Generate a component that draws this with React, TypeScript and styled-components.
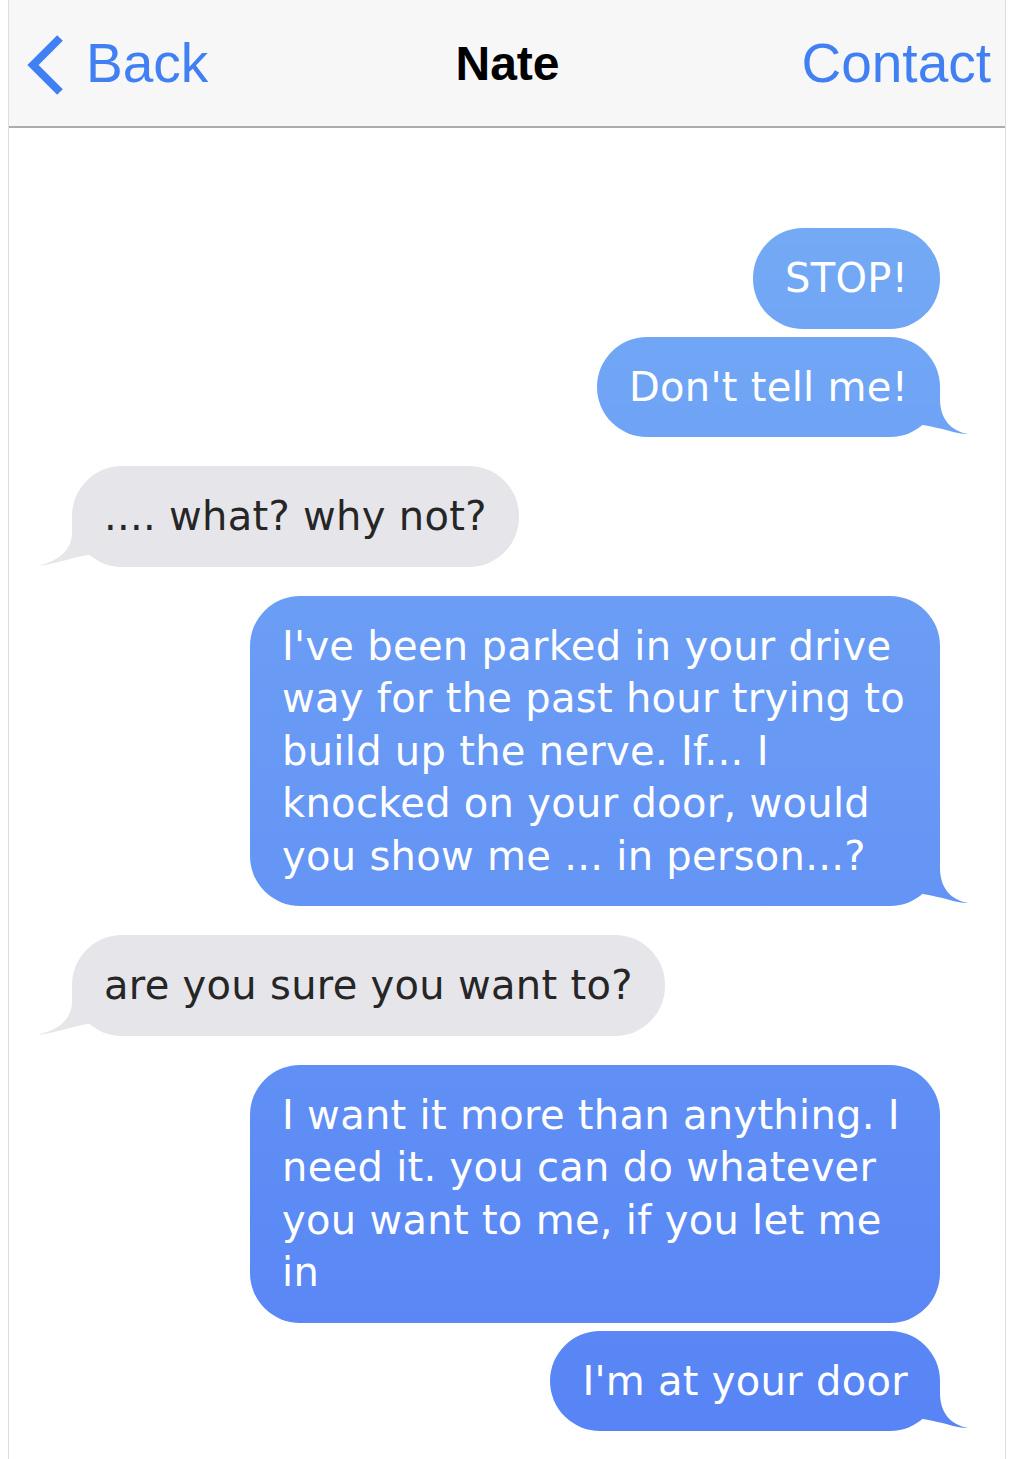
import React from "react";
import styled, { createGlobalStyle, css } from "styled-components";

type Sender = "me" | "them";

interface Message {
  id: number;
  from: Sender;
  text: string;
}

const messages: Message[] = [
  { id: 1, from: "me", text: "STOP!" },
  { id: 2, from: "me", text: "Don't tell me!" },
  { id: 3, from: "them", text: ".... what? why not?" },
  {
    id: 4,
    from: "me",
    text: "I've been parked in your drive way for the past hour trying to build up the nerve. If... I knocked on your door, would you show me ... in person...?",
  },
  { id: 5, from: "them", text: "are you sure you want to?" },
  {
    id: 6,
    from: "me",
    text: "I want it more than anything. I need it. you can do whatever you want to me, if you let me in",
  },
  { id: 7, from: "me", text: "I'm at your door" },
];

// outgoing bubbles share one gradient pinned to the viewport, so the colour
// shifts from light to deep blue down the thread
const meFill = "linear-gradient(to bottom, #79b0f5 0%, #5783f5 100%) fixed";
const themFill = "#e5e5ea";
const iosBlue = "#4180f2";

const GlobalStyle = createGlobalStyle`
  html, body {
    margin: 0;
    padding: 0;
    background: #fff;
  }
  body {
    -webkit-font-smoothing: antialiased;
  }
`;

const Chat: React.FC = () => {
  return (
    <Frame>
      <GlobalStyle />
      <NavBar>
        <NavLeft>
          <svg width="44" height="66" viewBox="0 0 44 66" fill="none">
            <polyline
              points="38,6 11,33 38,60"
              stroke={iosBlue}
              strokeWidth="8"
              strokeLinejoin="miter"
            />
          </svg>
          <NavLink>Back</NavLink>
        </NavLeft>
        <NavTitle>Nate</NavTitle>
        <NavRight>
          <NavLink>Contact</NavLink>
        </NavRight>
      </NavBar>
      <Thread>
        {messages.map((m, i) => {
          const prev = messages[i - 1];
          const next = messages[i + 1];
          const grouped = !!prev && prev.from === m.from;
          const tail = !next || next.from !== m.from;
          return (
            <Row key={m.id} $from={m.from} $grouped={grouped} $first={i === 0}>
              <Bubble $from={m.from} $tail={tail}>
                {m.text}
              </Bubble>
            </Row>
          );
        })}
      </Thread>
    </Frame>
  );
};

export default Chat;

const Frame = styled.div`
  box-sizing: border-box;
  width: 998px;
  min-height: 100vh;
  margin-left: 8px;
  border-left: 1px solid #dedede;
  border-right: 1px solid #dedede;
  display: flex;
  flex-direction: column;
`;

const NavBar = styled.header`
  height: 126px;
  background: #f7f7f7;
  border-bottom: 2px solid #acacac;
  display: grid;
  grid-template-columns: 1fr auto 1fr;
  align-items: center;
  padding: 0 14px 0 13px;
  font-family: "Liberation Sans", Arial, sans-serif;
`;

const NavLeft = styled.div`
  display: flex;
  align-items: center;
  gap: 20px;

  svg {
    display: block;
    margin-top: 4px;
  }
`;

const NavRight = styled.div`
  display: flex;
  justify-content: flex-end;
`;

const NavLink = styled.span`
  color: ${iosBlue};
  font-size: 55px;
`;

const NavTitle = styled.span`
  color: #000;
  font-size: 48px;
  font-weight: 700;
  padding-left: 2px;
`;

const Thread = styled.div`
  display: flex;
  flex-direction: column;
  padding: 100px 65px 20px 63px;
`;

const Row = styled.div<{ $from: Sender; $grouped: boolean; $first: boolean }>`
  display: flex;
  justify-content: ${(p) => (p.$from === "me" ? "flex-end" : "flex-start")};
  margin-top: ${(p) => (p.$first ? 0 : p.$grouped ? 8 : 29)}px;
`;

// tail hooks: the box straddles the bubble edge, clip-path cuts the curl
const meTail = css`
  right: -29px;
  width: 56px;
  clip-path: path("M 0 0 H 27 V 14 C 27 34, 38 46, 55 49 C 44 49.5, 30 43, 10 40 L 0 30 Z");
`;

const themTail = css`
  left: -34px;
  width: 61px;
  clip-path: path("M 61 0 H 34 V 18 C 34 36, 20 47, 0 51 C 10 51.5, 30 44, 52 40 L 61 30 Z");
`;

const Bubble = styled.div<{ $from: Sender; $tail: boolean }>`
  position: relative;
  z-index: 0;
  max-width: 626px;
  padding: 24px 32px;
  border-radius: 50px;
  font-family: "DejaVu Sans", Verdana, sans-serif;
  font-size: 40px;
  line-height: 52.5px;
  letter-spacing: 0.3px;
  background: ${(p) => (p.$from === "me" ? meFill : themFill)};
  color: ${(p) => (p.$from === "me" ? "#fff" : "#262626")};

  &::after {
    content: "";
    display: ${(p) => (p.$tail ? "block" : "none")};
    position: absolute;
    bottom: 0;
    height: 52px;
    z-index: -1;
    background: ${(p) => (p.$from === "me" ? meFill : themFill)};
    ${(p) => (p.$from === "me" ? meTail : themTail)}
  }
`;
